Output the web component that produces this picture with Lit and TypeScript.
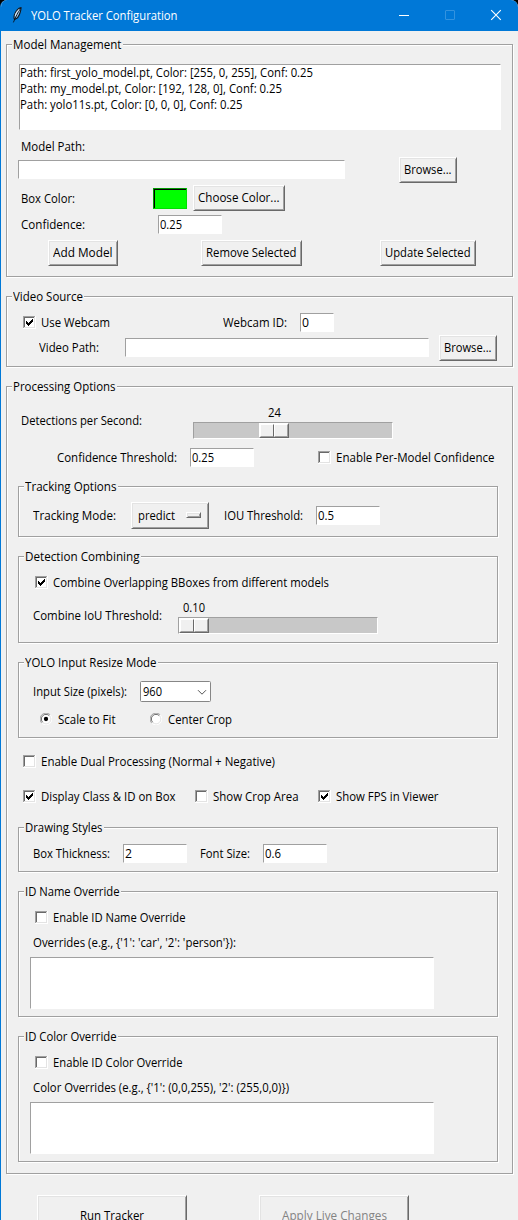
import { LitElement, html, css, svg, nothing } from "lit";
import { customElement, property } from "lit/decorators.js";

/** A single line of text, condensed or widened so that it fills a given advance width. */
@customElement("ui-text")
export class UiText extends LitElement {
  @property({ type: Number }) w = 0;
  @property() text = "";

  static styles = css`
    :host {
      display: block;
      height: 16px;
      line-height: 15px;
      white-space: pre;
    }
    .run {
      display: block;
      width: max-content;
      height: 16px;
      transform-origin: 0 0;
    }
  `;

  updated() {
    const run = this.renderRoot.querySelector<HTMLElement>(".run");
    if (!run || !this.w || !this.text.length) return;
    run.style.transform = "none";
    const natural = run.getBoundingClientRect().width;
    run.style.transform = `scaleX(${(this.w / natural).toFixed(4)})`;
    run.style.marginRight = `${(this.w - natural).toFixed(2)}px`;
  }

  render() {
    return html`<span class="run">${this.text}</span>`;
  }
}

@customElement("tk-check")
export class TkCheck extends LitElement {
  @property({ type: Boolean }) checked = false;

  static styles = css`
    :host {
      display: block;
      width: 13px;
      height: 13px;
    }
    svg {
      display: block;
    }
  `;

  render() {
    const tops = [5, 6, 7, 6, 5, 4, 3];
    return html`<svg width="13" height="13" viewBox="0 0 13 13" shape-rendering="crispEdges">
      <rect width="13" height="13" fill="#fff" />
      <path d="M0 0H12V1H1V12H0Z" fill="#a0a0a0" />
      <path d="M1 1H11V2H2V11H1Z" fill="#696969" />
      <path d="M11 1H12V12H1V11H11Z" fill="#e3e3e3" />
      ${this.checked
        ? tops.map((y, i) => svg`<rect x=${i + 3} y=${y} width="1" height="3" fill="#000" />`)
        : nothing}
    </svg>`;
  }
}

@customElement("tk-radio")
export class TkRadio extends LitElement {
  @property({ type: Boolean }) checked = false;

  static styles = css`
    :host {
      display: block;
      width: 12px;
      height: 12px;
    }
    svg {
      display: block;
    }
  `;

  render() {
    return html`<svg width="12" height="12" viewBox="0 0 12 12">
      <circle cx="6" cy="6" r="5" fill="#fff" />
      <path d="M1.8 10.2A5.6 5.6 0 0 1 10.2 1.8" fill="none" stroke="#a0a0a0" stroke-width="1" />
      <path d="M2.7 9.3A4.6 4.6 0 0 1 9.3 2.7" fill="none" stroke="#696969" stroke-width="1" />
      <path d="M10.2 1.8A5.6 5.6 0 0 1 1.8 10.2" fill="none" stroke="#fff" stroke-width="1" />
      <path d="M9.4 2.8A4.6 4.6 0 0 1 2.8 9.4" fill="none" stroke="#e3e3e3" stroke-width="0.9" />
      ${this.checked ? svg`<circle cx="6" cy="6" r="2.15" fill="#000" />` : nothing}
    </svg>`;
  }
}

@customElement("tk-scale")
export class TkScale extends LitElement {
  @property() value = "";
  @property({ type: Number }) valueWidth = 0;
  @property({ type: Number }) offset = 0;

  static styles = css`
    :host {
      display: block;
      width: 200px;
    }
    .value {
      display: flex;
      justify-content: center;
      width: 32.5px;
      height: 17px;
    }
    .trough {
      box-sizing: border-box;
      height: 17px;
      background: #c8c8c8;
      border: 1px solid;
      border-color: #a0a0a0 #fff #fff #a0a0a0;
    }
    .thumb {
      box-sizing: border-box;
      display: flex;
      width: 30px;
      height: 15px;
      border: 1px solid;
      border-color: #fff #696969 #696969 #fff;
    }
    .half {
      box-sizing: border-box;
      flex: 1;
      background: #f0f0f0;
      border: 1px solid;
      border-color: #fff #696969 #a0a0a0 #fff;
    }
    .half:last-child {
      border-right-color: #a0a0a0;
    }
  `;

  render() {
    const shift = `margin-left:${this.offset}px`;
    return html`
      <div class="value" style=${shift}>
        <ui-text .text=${this.value} w=${this.valueWidth}></ui-text>
      </div>
      <div class="trough">
        <div class="thumb" style=${shift}>
          <div class="half"></div>
          <div class="half"></div>
        </div>
      </div>
    `;
  }
}

const t = (text: string, w: number, cls = "") =>
  html`<ui-text class=${cls} .text=${text} w=${w}></ui-text>`;

@customElement("app-root")
export class AppRoot extends LitElement {
  static styles = css`
    :host {
      display: block;
      width: 518px;
      height: 1220px;
      overflow: hidden;
      background: #000;
      font-family: "Open Sans", "Noto Sans", sans-serif;
      font-size: 12px;
      color: #000;
    }
    .window {
      box-sizing: border-box;
      display: flex;
      flex-direction: column;
      height: 1220px;
      overflow: hidden;
      border-radius: 7px 7px 0 0;
      background: #f0f0f0;
      border-left: 1px solid #0078d7;
    }
    .titlebar {
      flex: none;
      display: flex;
      align-items: flex-start;
      height: 31px;
      margin-left: -1px;
      background: #0078d7;
      color: #fff;
    }
    .feather {
      margin: 7px 0 0 11px;
      width: 12px;
      height: 16px;
    }
    .caption {
      margin: 8px 0 0 8px;
      flex: 1;
    }
    .controls {
      display: flex;
      margin-top: 9px;
      gap: 34px;
      padding-right: 16px;
    }
    .controls svg,
    .feather {
      display: block;
    }

    .group {
      box-sizing: border-box;
      flex: none;
      display: flex;
      flex-direction: column;
      align-items: flex-start;
      border: 1px solid #a0a0a0;
      box-shadow:
        inset 1px 1px 0 #fff,
        1px 1px 0 #fff;
    }
    .legend {
      margin: -8px 0 -8px 5px;
      padding: 0 1px;
      background: #f0f0f0;
    }
    .outer {
      width: 507px;
      margin-left: 5px;
    }
    .inner {
      width: 480px;
      margin: 19px 0 0 11px;
    }
    .g-models { margin-top: 13px; height: 233px; }
    .g-video { margin-top: 19px; height: 71px; }
    .g-processing { margin-top: 19px; height: 788px; }
    .g-tracking { height: 51px; }
    .g-combine { height: 87px; }
    .g-resize { height: 76px; }
    .g-drawing { height: 45px; margin-top: 22px; }
    .g-override { height: 126px; }

    .row {
      display: grid;
      align-items: start;
      justify-items: start;
    }
    .r-label { margin: 9px 0 0 14px; height: 16px; }
    .r-path { margin: 2px 0 0 11px; height: 26px; grid-template-columns: 381px 58px; }
    .r-color { margin: 2px 0 0 14px; height: 26px; grid-template-columns: 132px 40px 92px; }
    .r-conf { margin: 4px 0 0 14px; height: 19px; grid-template-columns: 137px 64px; }
    .r-actions { margin: 6px 0 0 41px; height: 26px; grid-template-columns: 153px 179px 96px; }
    .r-webcam { margin: 16px 0 0 16px; height: 19px; grid-template-columns: 18px 182px 77px 34px; }
    .r-video { margin: 3px 0 0 32px; height: 26px; grid-template-columns: 86px 314px 58px; }
    .r-dps { margin: 18px 0 0 14px; height: 34px; grid-template-columns: 172px 200px; }
    .r-threshold { margin: 9px 0 0 50px; height: 19px; grid-template-columns: 133px 128px 18px 158px; }
    .r-mode { margin: 15px 0 0 14px; height: 27px; grid-template-columns: 98px 93px 92px 64px; }
    .r-check { margin: 18px 0 0 16px; height: 16px; grid-template-columns: 18px auto; }
    .r-iou { margin: 9px 0 0 14px; height: 34px; grid-template-columns: 145px 200px; }
    .r-size { margin: 18px 0 0 14px; height: 21px; grid-template-columns: 107px 71px; }
    .r-radio { margin: 10px 0 0 21px; height: 16px; grid-template-columns: 18px 92px 18px 70px; }
    .r-dual { margin: 16px 0 0 16px; height: 16px; grid-template-columns: 18px auto; }
    .r-flags { margin: 19px 0 0 16px; height: 16px; grid-template-columns: 18px 154px 18px 105px 18px auto; }
    .r-draw { margin: 16px 0 0 14px; height: 19px; grid-template-columns: 90px 77px 63px 64px; }

    .t1 { margin-top: 1px; }
    .t2 { margin-top: 2px; }
    .t3 { margin-top: 3px; }
    .t4 { margin-top: 4px; }
    .t5 { margin-top: 5px; }
    .t6 { margin-top: 6px; }
    .t8 { margin-top: 8px; }

    .field {
      box-sizing: border-box;
      background: #fff;
      border: 1px solid;
      border-color: #a0a0a0 #fff #fff #a0a0a0;
    }
    .entry {
      height: 19px;
      padding: 1px 0 0 1px;
    }
    .w34 { width: 34px; }
    .w64 { width: 64px; }
    .w304 { width: 304px; }
    .w327 { width: 327px; }
    .listbox {
      margin: 19px 0 0 12px;
      width: 482px;
      height: 66px;
    }
    .memo {
      margin: 6px 0 0 11px;
      width: 404px;
      height: 52px;
    }
    .btn {
      box-sizing: border-box;
      display: flex;
      justify-content: center;
      align-items: center;
      height: 26px;
      border: 1px solid;
      border-color: #fff #696969 #696969 #fff;
      box-shadow:
        inset 1px 1px 0 #e3e3e3,
        inset -1px -1px 0 #a0a0a0;
    }
    .b58 { width: 58px; }
    .b70 { width: 70px; }
    .b92 { width: 92px; }
    .b96 { width: 96px; }
    .b101 { width: 101px; }
    .swatch {
      box-sizing: border-box;
      width: 34px;
      height: 21px;
      background: #00ff00;
      border: 1px solid;
      border-color: #009a00 #00e000 #00e000 #009a00;
      box-shadow: inset 1px 1px 0 #000;
    }
    .menu {
      width: 78px;
      height: 27px;
      justify-content: flex-start;
      padding-left: 6px;
      gap: 11px;
    }
    .menu ui-text {
      padding-top: 1px;
    }
    .nub {
      box-sizing: border-box;
      width: 15px;
      height: 6px;
      margin-bottom: 1px;
      border: 1px solid;
      border-color: #fff #696969 #696969 #fff;
      box-shadow:
        inset 1px 1px 0 #e3e3e3,
        inset -1px -1px 0 #a0a0a0;
    }
    .combo {
      box-sizing: border-box;
      display: flex;
      justify-content: space-between;
      width: 71px;
      height: 21px;
      padding: 2px 3px 0 2px;
      background: #fff;
      border: 1px solid #868686;
      border-radius: 1.5px;
    }
    .chevron {
      display: block;
      margin-top: 5px;
    }
    .footer {
      flex: none;
      display: flex;
      gap: 72px;
      margin: 21px 0 0 36px;
    }
    .big {
      width: 150px;
      height: 42px;
    }
    .disabled {
      color: #838383;
    }
  `;

  private models = [
    { text: "Path: first_yolo_model.pt, Color: [255, 0, 255], Conf: 0.25", w: 293 },
    { text: "Path: my_model.pt, Color: [192, 128, 0], Conf: 0.25", w: 262 },
    { text: "Path: yolo11s.pt, Color: [0, 0, 0], Conf: 0.25", w: 222.5 },
  ];

  private entry(cls: string, text = "", w = 0) {
    return html`<div class="field entry ${cls}">${text ? t(text, w) : nothing}</div>`;
  }

  private button(cls: string, text: string, w: number) {
    return html`<div class="btn ${cls}">${t(text, w)}</div>`;
  }

  private titlebar() {
    return html`<div class="titlebar">
      <svg class="feather" viewBox="0 0 12 16">
        <path d="M10 0.6C7.4 1 4.2 4.4 3.3 8.2C2.9 10 3 11.6 3.5 12.4C5.8 11.8 8.4 8.4 9.3 5C9.8 3 10.2 1.4 10 0.6Z" fill="#9cc3e6" stroke="#101820" stroke-width="1.1" />
        <path d="M9.2 2C7.2 5 5 9 2.4 15.4" fill="none" stroke="#0a1118" stroke-width="0.9" />
        <path d="M8.2 2.4C6.4 3.8 4.9 6.2 4.3 8.8" fill="none" stroke="#f4f8fc" stroke-width="0.9" />
      </svg>
      ${t("YOLO Tracker Configuration", 146.5, "caption")}
      <div class="controls">
        <svg width="12" height="12" viewBox="0 0 12 12"><path d="M1 6.5H11" stroke="#fff" /></svg>
        <svg width="12" height="12" viewBox="0 0 12 12">
          <rect x="1.5" y="1.5" width="9" height="9" rx="0.5" fill="none" stroke="#3393df" />
        </svg>
        <svg width="12" height="12" viewBox="0 0 12 12">
          <path d="M1.2 1.2L10.8 10.8M10.8 1.2L1.2 10.8" stroke="#fff" stroke-width="1.1" />
        </svg>
      </div>
    </div>`;
  }

  private modelManagement() {
    return html`<section class="group outer g-models">
      ${t("Model Management", 108.5, "legend")}
      <div class="field listbox">${this.models.map((m) => t(m.text, m.w))}</div>
      <div class="row r-label">${t("Model Path:", 64)}</div>
      <div class="row r-path">${this.entry("w327 t3")} ${this.button("b58", "Browse...", 47.5)}</div>
      <div class="row r-color">
        ${t("Box Color:", 54, "t6")}
        <div class="swatch t3"></div>
        ${this.button("b92", "Choose Color...", 81.5)}
      </div>
      <div class="row r-conf">${t("Confidence:", 64, "t2")} ${this.entry("w64", "0.25", 22)}</div>
      <div class="row r-actions">
        ${this.button("b70", "Add Model", 59.5)} ${this.button("b101", "Remove Selected", 90.5)}
        ${this.button("b96", "Update Selected", 85.5)}
      </div>
    </section>`;
  }

  private videoSource() {
    return html`<section class="group outer g-video">
      ${t("Video Source", 70, "legend")}
      <div class="row r-webcam">
        <tk-check class="t3" checked></tk-check>
        ${t("Use Webcam", 69, "t2")} ${t("Webcam ID:", 64, "t2")} ${this.entry("w34", "0", 7)}
      </div>
      <div class="row r-video">
        ${t("Video Path:", 60, "t5")} ${this.entry("w304 t3")} ${this.button("b58", "Browse...", 47.5)}
      </div>
    </section>`;
  }

  private override(title: string, tw: number, check: string, cw: number, hint: string, hw: number) {
    return html`<section class="group inner g-override">
      ${t(title, tw, "legend")}
      <div class="row r-check"><tk-check class="t1"></tk-check>${t(check, cw)}</div>
      <div class="row r-label">${t(hint, hw)}</div>
      <div class="field memo"></div>
    </section>`;
  }

  private processing() {
    return html`<section class="group outer g-processing">
      ${t("Processing Options", 102.5, "legend")}
      <div class="row r-dps">
        ${t("Detections per Second:", 121, "t8")}
        <tk-scale value="24" .valueWidth=${13} .offset=${65}></tk-scale>
      </div>
      <div class="row r-threshold">
        ${t("Confidence Threshold:", 120, "t2")} ${this.entry("w64", "0.25", 22)}
        <tk-check class="t3"></tk-check>
        ${t("Enable Per-Model Confidence", 158.5, "t2")}
      </div>

      <section class="group inner g-tracking">
        ${t("Tracking Options", 91.5, "legend")}
        <div class="row r-mode">
          ${t("Tracking Mode:", 83, "t6")}
          <div class="btn menu">${t("predict", 37)}<span class="nub"></span></div>
          ${t("IOU Threshold:", 79, "t6")} ${this.entry("w64 t4", "0.5", 16)}
        </div>
      </section>

      <section class="group inner g-combine">
        ${t("Detection Combining", 114.5, "legend")}
        <div class="row r-check">
          <tk-check class="t1" checked></tk-check>
          ${t("Combine Overlapping BBoxes from different models", 276)}
        </div>
        <div class="row r-iou">
          ${t("Combine IoU Threshold:", 129, "t8")}
          <tk-scale value="0.10" .valueWidth=${22} .offset=${0}></tk-scale>
        </div>
      </section>

      <section class="group inner g-resize">
        ${t("YOLO Input Resize Mode", 131.5, "legend")}
        <div class="row r-size">
          ${t("Input Size (pixels):", 94, "t3")}
          <div class="combo">
            ${t("960", 19)}
            <svg class="chevron" width="10" height="7" viewBox="0 0 10 7">
              <path d="M1 1.2L5 5.2L9 1.2" fill="none" stroke="#555" />
            </svg>
          </div>
        </div>
        <div class="row r-radio">
          <tk-radio class="t1" checked></tk-radio>
          ${t("Scale to Fit", 57.5)}
          <tk-radio class="t1"></tk-radio>
          ${t("Center Crop", 64)}
        </div>
      </section>

      <div class="row r-dual">
        <tk-check class="t1"></tk-check>
        ${t("Enable Dual Processing (Normal + Negative)", 234)}
      </div>
      <div class="row r-flags">
        <tk-check class="t1" checked></tk-check>
        ${t("Display Class & ID on Box", 134.5)}
        <tk-check class="t1"></tk-check>
        ${t("Show Crop Area", 85.5)}
        <tk-check class="t1" checked></tk-check>
        ${t("Show FPS in Viewer", 102.5)}
      </div>

      <section class="group inner g-drawing">
        ${t("Drawing Styles", 77.5, "legend")}
        <div class="row r-draw">
          ${t("Box Thickness:", 77, "t2")} ${this.entry("w64", "2", 7)}
          ${t("Font Size:", 50, "t2")} ${this.entry("w64", "0.6", 16)}
        </div>
      </section>

      ${this.override(
        "ID Name Override", 94.5,
        "Enable ID Name Override", 132.5,
        "Overrides (e.g., {'1': 'car', '2': 'person'}):", 203,
      )}
      ${this.override(
        "ID Color Override", 91.5,
        "Enable ID Color Override", 129.5,
        "Color Overrides (e.g., {'1': (0,0,255), '2': (255,0,0)})", 256,
      )}
    </section>`;
  }

  render() {
    return html`<main class="window">
      ${this.titlebar()} ${this.modelManagement()} ${this.videoSource()} ${this.processing()}
      <div class="footer">
        ${this.button("big", "Run Tracker", 64)}
        ${this.button("big disabled", "Apply Live Changes", 105)}
      </div>
    </main>`;
  }
}
